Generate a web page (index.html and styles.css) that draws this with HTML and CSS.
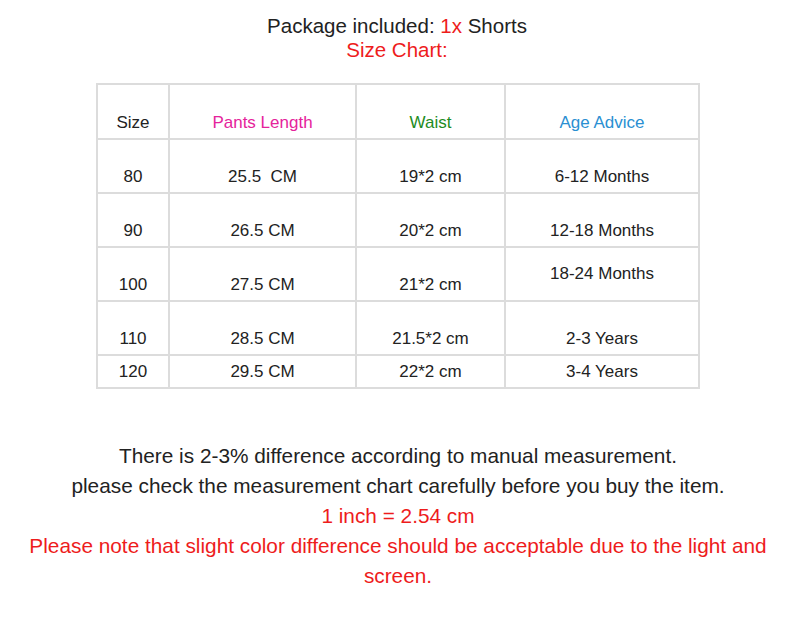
FILE: index.html
```html
<!DOCTYPE html>
<html>
<head>
<meta charset="utf-8">
<link rel="stylesheet" href="styles.css">
</head>
<body>
<div class="page">
  <div class="intro">
    <p class="line">Package included: <span class="red">1x</span> Shorts</p>
    <p class="line red">Size Chart:</p>
  </div>
  <table class="chart">
    <colgroup>
      <col class="c1"><col class="c2"><col class="c3"><col class="c4">
    </colgroup>
    <tr class="head">
      <td>Size</td>
      <td class="pink">Pants Length</td>
      <td class="green">Waist</td>
      <td class="blue">Age Advice</td>
    </tr>
    <tr class="row"><td>80</td><td>25.5&nbsp; CM</td><td>19*2 cm</td><td>6-12 Months</td></tr>
    <tr class="row"><td>90</td><td>26.5 CM</td><td>20*2 cm</td><td>12-18 Months</td></tr>
    <tr class="row"><td>100</td><td>27.5 CM</td><td>21*2 cm</td><td class="raised">18-24 Months</td></tr>
    <tr class="row"><td>110</td><td>28.5 CM</td><td>21.5*2 cm</td><td>2-3 Years</td></tr>
    <tr class="row short"><td>120</td><td>29.5 CM</td><td>22*2 cm</td><td>3-4 Years</td></tr>
  </table>
  <div class="notes">
    <p>There is 2-3% difference according to manual measurement.</p>
    <p>please check the measurement chart carefully before you buy the item.</p>
    <p class="red">1 inch = 2.54 cm</p>
    <p class="red">Please note that slight color difference should be acceptable due to the light and screen.</p>
  </div>
</div>
</body>
</html>
```
FILE: styles.css
```css
html, body {
  margin: 0;
  padding: 0;
  background: #ffffff;
}
body {
  font-family: "Liberation Sans", Arial, sans-serif;
  color: #222222;
}
.page {
  width: 800px;
  display: flex;
  flex-direction: column;
  align-items: center;
}
p {
  margin: 0;
}
.intro {
  padding-top: 14px;
  text-align: center;
  font-size: 20.5px;
  line-height: 24px;
  margin-left: -6px;
}
.red {
  color: #ee1c1c;
}
.chart {
  margin-top: 21px;
  margin-left: -4px;
  border-collapse: collapse;
  border: 2px solid #dcdcdc;
  font-size: 17px;
  line-height: 20px;
  color: #222222;
}
.c1 { width: 72px; }
.c2 { width: 187px; }
.c3 { width: 149px; }
.c4 { width: 194px; }
.chart td {
  border: 2px solid #dcdcdc;
  text-align: center;
  vertical-align: bottom;
  padding: 0 0 5px 0;
}
.chart .head td {
  height: 48px;
  padding-bottom: 5px;
}
.chart .row td {
  height: 47px;
}
.chart .row td.raised {
  height: 36px;
  padding-bottom: 16px;
}
.chart .row.short td {
  height: 26px;
}
.pink { color: #e5239b; }
.green { color: #1e8c23; }
.blue { color: #2a8fd2; }
.notes {
  margin-top: 52px;
  width: 740px;
  text-align: center;
  font-size: 20.8px;
  line-height: 30px;
  margin-left: -4px;
}
```
